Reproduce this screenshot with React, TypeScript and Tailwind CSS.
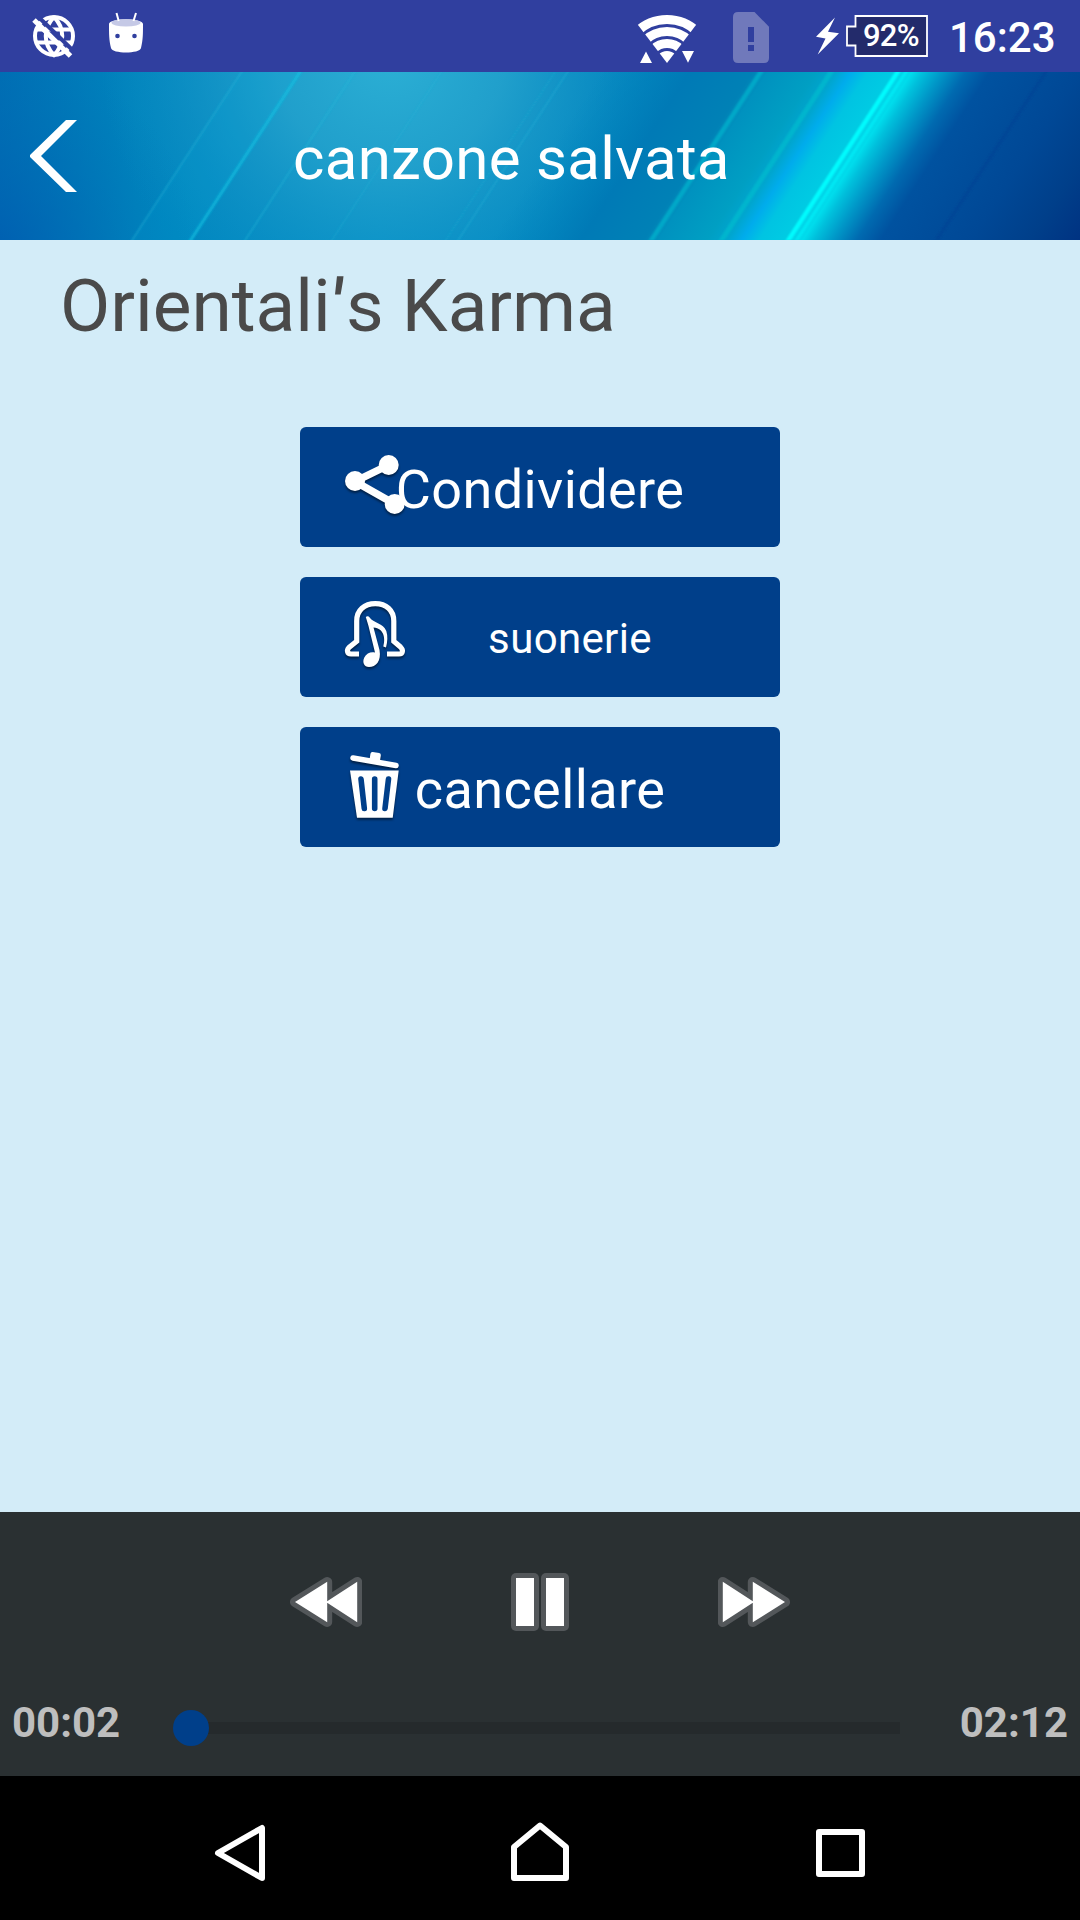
import type { ReactNode } from 'react';

const ShareIcon = () => (
    <svg width="60" height="72" viewBox="0 0 60 72" className="overflow-visible drop-shadow-[0_2px_1px_rgba(0,0,0,0.5)]">
        <path d="M43.7 14 L10 30.5 L49.7 53" fill="none" stroke="#fff" strokeWidth="7.5" />
        <circle cx="10" cy="30" r="10" fill="#fff" />
        <circle cx="43.7" cy="14" r="10" fill="#fff" />
        <circle cx="49.7" cy="53" r="10" fill="#fff" />
    </svg>
);

const BellIcon = () => (
    <svg width="60" height="72" viewBox="0 0 60 72" className="overflow-visible drop-shadow-[0_2px_1px_rgba(0,0,0,0.5)]">
        <path
            d="M14 53 H6 C2 53 1.5 49 4 46.5 L11.7 40.3 V20 C11.7 9 19.5 2.7 30.3 2.7 C41 2.7 48.8 9 48.8 20 V40.3 L55.5 46 C58.5 49 58 53 54 53 H42"
            fill="none"
            stroke="#fff"
            strokeWidth="5.2"
        />
        <path
            d="M20.8 16 C22 14.5 24 15 25 17 C29 22 38 22 41.3 30 C43 35 42.5 41 41 46.5 L38.3 45.5 C40.5 38 39.5 27.5 28.5 26.5 L34.5 49 C36.5 60 31 66 24 66 C19 66 17 61 19.3 56.5 C21.5 52 26 50.5 30 51.5 L23.5 25 Z"
            fill="#fff"
        />
    </svg>
);

const TrashIcon = () => (
    <svg width="60" height="72" viewBox="0 0 60 72" className="overflow-visible drop-shadow-[0_2px_1px_rgba(0,0,0,0.5)]">
        <path d="M8 7 L51 14.5" stroke="#fff" strokeWidth="5.5" strokeLinecap="round" />
        <rect x="25" y="1.5" width="10.5" height="9" rx="2" transform="rotate(9 30 6)" fill="#fff" />
        <path d="M5 19.5 H53.7 L47.7 66.7 H12 Z" fill="#fff" />
        <path d="M16 28 L19.3 57.5 M29.7 28 V57.5 M43.5 28 L40 57.5" stroke="#003f8a" strokeWidth="5.6" strokeLinecap="round" />
    </svg>
);

const StatusBar = () => (
    <div className="flex h-[72px] items-center bg-[#303f9f] text-white">
        <svg width="200" height="72" viewBox="0 0 200 72">
            <g fill="none" stroke="#fff" strokeWidth="4">
                <circle cx="54" cy="36" r="19" />
                <path d="M54 17 C43 28 43 44 54 55 C65 44 65 28 54 17" />
                <path d="M37 29.5 H71 M37 42.5 H71" />
            </g>
            <path d="M37.5 16 L74 51.5" stroke="#303f9f" strokeWidth="4" />
            <path d="M34 20 L70.5 56" stroke="#fff" strokeWidth="5" />
            <path d="M109 24 C109 18 143 18 143 24 C143 34 143 40 141 48 C140 54 112 54 111 48 C109 40 109 34 109 24" fill="#fff" />
            <ellipse cx="126" cy="22.7" rx="14.5" ry="3.8" fill="#c5c9e6" />
            <path d="M116.5 13 L118.7 21 M136 13 L133.5 21" stroke="#fff" strokeWidth="2" />
            <circle cx="117.5" cy="36" r="2.3" fill="#303f9f" />
            <circle cx="134.5" cy="36" r="2.3" fill="#303f9f" />
        </svg>
        <svg className="ml-auto" width="220" height="72" viewBox="630 0 220 72">
            <clipPath id="wedge">
                <path d="M667 63 L630 14.5 V0 H704 V14.5 Z" />
            </clipPath>
            <g clipPath="url(#wedge)" fill="none" stroke="#fff" strokeWidth="9">
                <circle cx="667" cy="63" r="43.5" />
                <circle cx="667" cy="63" r="31.5" />
                <circle cx="667" cy="63" r="19.5" />
                <circle cx="667" cy="63" r="12" fill="#fff" stroke="none" />
            </g>
            <path d="M640 63 L646 51.5 L652 63 Z M682 51 H694 L688 62.7 Z" fill="#fff" />
            <path d="M738 12 H754.5 L769 26.7 V58 Q769 63 764 63 H738 Q733 63 733 58 V17 Q733 12 738 12 Z" fill="#7079bb" />
            <path d="M748 27 H754 V42 H748 Z M748 45 H754 V51 H748 Z" fill="#303f9f" />
            <path d="M835 17.5 L816 36.7 L825.5 38.5 L817.7 54.5 L839 33.3 L828 31.7 Z" fill="#fff" />
        </svg>
        <div className="relative -ml-1 h-[72px] w-[82px]">
            <svg width="82" height="72" viewBox="846 0 82 72">
                <path d="M855.5 16 H927 V56 H855.5 V45.5 H847 V26.5 H855.5 Z" fill="#232b6b" stroke="#fff" strokeWidth="1.8" />
            </svg>
            <span className="absolute left-[17px] top-0 text-[31px] font-medium leading-[71px] tracking-[-0.8px]">92%</span>
        </div>
        <span className="ml-[21px] mr-[26px] w-[105px] whitespace-nowrap text-[42px] font-medium leading-[72px]">
            <span className="relative top-[2px]">16:23</span>
        </span>
    </div>
);

const Header = () => (
    <header className="relative h-[168px] overflow-hidden">
        <svg className="absolute inset-0" width="1080" height="168" viewBox="0 0 1080 168">
            <defs>
                <linearGradient id="base" x1="0" y1="0" x2="760" y2="0" gradientUnits="userSpaceOnUse">
                    <stop offset="0" stopColor="#006eb4" />
                    <stop offset="0.18" stopColor="#0084bd" />
                    <stop offset="0.5" stopColor="#0090c8" />
                    <stop offset="1" stopColor="#007cb8" />
                </linearGradient>
                <radialGradient id="glow" cx="390" cy="-20" r="290" gradientUnits="userSpaceOnUse">
                    <stop offset="0" stopColor="#2cb0d5" />
                    <stop offset="0.4" stopColor="#26a3cd" stopOpacity="0.85" />
                    <stop offset="1" stopColor="#1590c4" stopOpacity="0" />
                </radialGradient>
                <radialGradient id="corner" cx="-20" cy="190" r="220" gradientUnits="userSpaceOnUse">
                    <stop offset="0" stopColor="#0058b0" stopOpacity="0.8" />
                    <stop offset="1" stopColor="#0070b4" stopOpacity="0" />
                </radialGradient>
                {/* drawn in skewed space, x is where the band meets the top edge */}
                <linearGradient id="beam" x1="600" y1="0" x2="1200" y2="0" gradientUnits="userSpaceOnUse">
                    <stop offset="0" stopColor="#0084bd" stopOpacity="0" />
                    <stop offset="0.15" stopColor="#007ab6" />
                    <stop offset="0.255" stopColor="#0081b6" />
                    <stop offset="0.28" stopColor="#0092bf" />
                    <stop offset="0.36" stopColor="#009fc3" />
                    <stop offset="0.395" stopColor="#00a6d0" />
                    <stop offset="0.418" stopColor="#00acec" />
                    <stop offset="0.447" stopColor="#00c4e2" />
                    <stop offset="0.49" stopColor="#00cbe3" />
                    <stop offset="0.52" stopColor="#00dcec" />
                    <stop offset="0.538" stopColor="#00c0dc" />
                    <stop offset="0.57" stopColor="#0098c8" />
                    <stop offset="0.61" stopColor="#006ab0" />
                    <stop offset="0.65" stopColor="#0052a0" />
                    <stop offset="0.8" stopColor="#004896" />
                    <stop offset="0.9" stopColor="#003f8a" />
                    <stop offset="1" stopColor="#003080" />
                </linearGradient>
                <filter id="soft" x="0" y="-10%" width="100%" height="120%">
                    <feGaussianBlur stdDeviation="1 0" />
                </filter>
            </defs>
            <rect width="1080" height="168" fill="url(#base)" />
            <rect width="1080" height="168" fill="url(#glow)" />
            <rect width="400" height="168" fill="url(#corner)" />
            <g transform="matrix(1 0 -0.65 1 0 0)">
                <rect x="600" width="600" height="168" fill="url(#beam)" />
            </g>
            <g filter="url(#soft)">
                <g transform="matrix(1 0 -0.65 1 0 0)">
                    <rect x="240" width="3" height="168" fill="#22b8dc" opacity="0.35" />
                    <rect x="243" width="55" height="168" fill="#00b0e0" opacity="0.12" />
                    <rect x="298" width="4" height="168" fill="#0cc0e2" opacity="0.65" />
                    <rect x="353" width="3" height="168" fill="#22b8dc" opacity="0.3" />
                    <rect x="440" width="2.5" height="168" fill="#22b8dc" opacity="0.2" />
                    <rect x="554" width="2" height="168" fill="#22b8dc" opacity="0.2" />
                    <rect x="566" width="3" height="168" fill="#22b8dc" opacity="0.25" />
                    <rect x="758" width="5.5" height="168" fill="#08b2cc" opacity="0.75" />
                    <rect x="828" width="6" height="168" fill="#06bccf" opacity="0.7" />
                    <rect x="895" width="5.5" height="168" fill="#00fafd" />
                    <rect x="904" width="4" height="168" fill="#00ecf6" opacity="0.8" />
                    <rect x="1044" width="4" height="168" fill="#003a90" opacity="0.35" />
                </g>
            </g>
        </svg>
        <div className="relative flex h-full items-center">
            <svg className="ml-[30px]" width="48" height="72" viewBox="0 0 48 72">
                <path d="M36 0 H47 L11 36 L47 72 H36 L0 37 V35 Z" fill="#fff" />
            </svg>
            <h1 className="ml-[215px] whitespace-nowrap pt-[5px] text-[60px] leading-[70px] tracking-[0.3px] text-white">
                canzone salvata
            </h1>
        </div>
    </header>
);

const ActionButton = ({ icon, children }: { icon: ReactNode; children: ReactNode }) => (
    <button className="relative h-[120px] w-[480px] rounded-md bg-[#003f8a] text-white">
        <span className="absolute left-[45px] top-[24px]">{icon}</span>
        {children}
    </button>
);

const Player = () => (
    <section className="h-[264px] bg-[#2a3032]">
        <div className="flex justify-center gap-[142px] pt-[54px]">
            <svg width="72" height="72" viewBox="290 1566 72 72">
                <path d="M295 1602 L327.2 1582 V1622 Z M326 1602 L357.2 1582 V1622 Z" fill="#53575a" stroke="#53575a" strokeWidth="10" strokeLinejoin="round" />
                <path d="M295 1602 L327.2 1581.8 V1622.2 Z M326 1602 L357.2 1581.8 V1622.2 Z" fill="#fff" />
            </svg>
            <svg width="72" height="72" viewBox="504 1566 72 72">
                <rect x="511" y="1573" width="28" height="58" rx="5" fill="#53575a" />
                <rect x="541" y="1573" width="28" height="58" rx="5" fill="#53575a" />
                <path d="M516 1578 H534 V1626 H516 Z M546 1578 H564 V1626 H546 Z" fill="#fff" />
            </svg>
            <svg width="72" height="72" viewBox="718 1566 72 72">
                <path d="M722.8 1582 L754 1602 L722.8 1622 Z M752.8 1582 L785 1602 L752.8 1622 Z" fill="#53575a" stroke="#53575a" strokeWidth="10" strokeLinejoin="round" />
                <path d="M722.8 1581.8 L754 1602 L722.8 1622.2 Z M752.8 1581.8 L785 1602 L752.8 1622.2 Z" fill="#fff" />
            </svg>
        </div>
        <div className="flex items-center px-3 pt-[60px] text-[42px] font-bold leading-[60px] text-[#bebebe]">
            <span className="relative -top-[5px] w-[161px]">00:02</span>
            <div className="flex flex-1 items-center">
                <div className="z-10 h-9 w-9 rounded-full bg-[#003f8a]"></div>
                <div className="-ml-[18px] mr-[60px] h-3 flex-1 bg-[#252a2c]"></div>
            </div>
            <span className="relative -top-[5px]">02:12</span>
        </div>
    </section>
);

const NavBar = () => (
    <nav className="flex h-36 items-center justify-around bg-black px-[90px]">
        <svg width="72" height="72" viewBox="204 1812 72 72" fill="none" stroke="#fff" strokeWidth="6" strokeLinejoin="round">
            <path d="M218 1853 L262 1828 V1878 Z" />
        </svg>
        <svg width="72" height="72" viewBox="504 1812 72 72" fill="none" stroke="#fff" strokeWidth="6" strokeLinejoin="round">
            <path d="M514 1878 V1847 L540 1825.5 L566 1847 V1878 Z" />
        </svg>
        <svg width="72" height="72" viewBox="804 1812 72 72" fill="none" stroke="#fff" strokeWidth="6" strokeLinejoin="round">
            <path d="M819 1832 H862 V1874 H819 Z" />
        </svg>
    </nav>
);

export default function App() {
    return (
        <div className="flex h-[1920px] w-[1080px] flex-col overflow-hidden bg-[#d3ecf8] font-[Roboto,sans-serif]">
            <StatusBar />
            <Header />
            <main className="flex-1">
                <h2 className="ml-[60px] mt-[24px] text-[73px] leading-[84px] text-[#4a4a4a]">
                    Orientali<span className="mr-[3px] inline-block -skew-x-6 font-medium">'</span>s Karma
                </h2>
                <div className="mt-[79px] flex flex-col items-center gap-[30px]">
                    <ActionButton icon={<ShareIcon />}>
                        <span className="relative top-[2px] text-[54px] tracking-[0.4px]">Condividere</span>
                    </ActionButton>
                    <ActionButton icon={<BellIcon />}>
                        <span className="relative top-px pl-[60px] text-[42px] tracking-[0.35px]">suonerie</span>
                    </ActionButton>
                    <ActionButton icon={<TrashIcon />}>
                        <span className="relative top-[2px] text-[54px] tracking-[0.4px]">cancellare</span>
                    </ActionButton>
                </div>
            </main>
            <Player />
            <NavBar />
        </div>
    );
}
